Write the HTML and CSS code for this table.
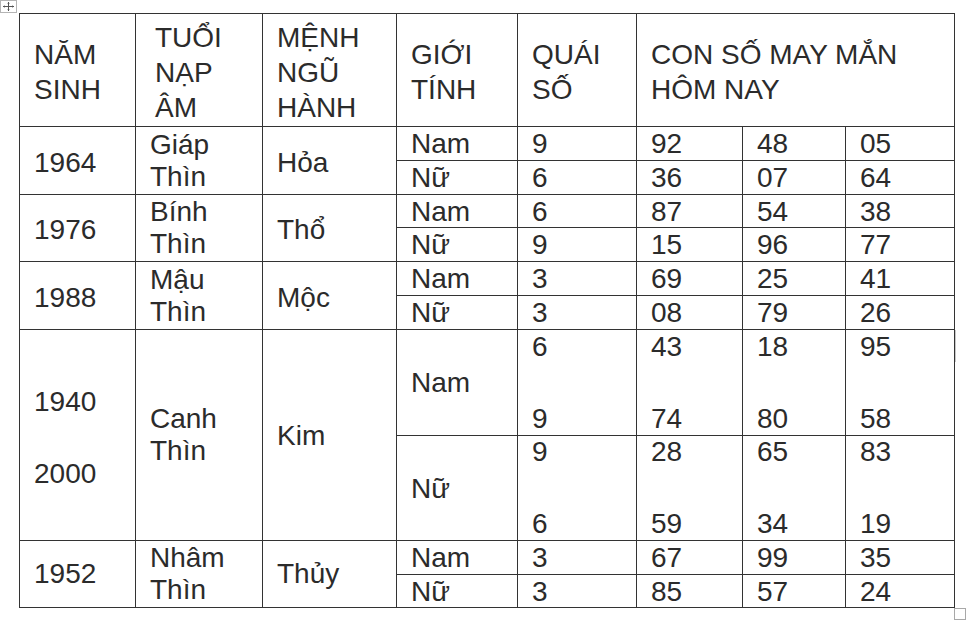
FILE: index.html
```html
<!DOCTYPE html>
<html lang="vi">
<head>
<meta charset="utf-8">
<title>Con số may mắn</title>
<link rel="stylesheet" href="styles.css">
</head>
<body>
<div class="page">
  <div class="handle">
    <svg width="17" height="13" viewBox="0 0 17 13">
      <rect x="0.5" y="0.5" width="16" height="12" fill="#fff" stroke="#b4b4b4"/>
      <path d="M3 6.5H14M8.5 2V11" stroke="#555" stroke-width="1" fill="none"/>
      <path d="M3 6.5L4.8 5.3V7.7Z M14 6.5L12.2 5.3V7.7Z M8.5 2L7.3 3.8H9.7Z M8.5 11L7.3 9.2H9.7Z" fill="#555"/>
    </svg>
  </div>
  <table class="grid">
    <colgroup>
      <col class="c1"><col class="c2"><col class="c3"><col class="c4"><col class="c5"><col class="c6"><col class="c7"><col class="c8">
    </colgroup>
    <tr class="hd">
      <td>NĂM<br>SINH</td>
      <td class="indent">TUỔI<br>NẠP<br>ÂM</td>
      <td>MỆNH<br>NGŨ<br>HÀNH</td>
      <td>GIỚI<br>TÍNH</td>
      <td>QUÁI<br>SỐ</td>
      <td colspan="3">CON SỐ MAY MẮN<br>HÔM NAY</td>
    </tr>
    <tr class="r34">
      <td rowspan="2" class="sp">1964</td>
      <td rowspan="2" class="two">Giáp<br>Thìn</td>
      <td rowspan="2" class="sp">Hỏa</td>
      <td>Nam</td><td>9</td><td>92</td><td>48</td><td>05</td>
    </tr>
    <tr class="r34">
      <td>Nữ</td><td>6</td><td>36</td><td>07</td><td>64</td>
    </tr>
    <tr class="r33">
      <td rowspan="2" class="sp">1976</td>
      <td rowspan="2" class="two">Bính<br>Thìn</td>
      <td rowspan="2" class="sp">Thổ</td>
      <td>Nam</td><td>6</td><td>87</td><td>54</td><td>38</td>
    </tr>
    <tr class="r34">
      <td>Nữ</td><td>9</td><td>15</td><td>96</td><td>77</td>
    </tr>
    <tr class="r34">
      <td rowspan="2" class="sp">1988</td>
      <td rowspan="2" class="two">Mậu<br>Thìn</td>
      <td rowspan="2" class="sp">Mộc</td>
      <td>Nam</td><td>3</td><td>69</td><td>25</td><td>41</td>
    </tr>
    <tr class="r34">
      <td>Nữ</td><td>3</td><td>08</td><td>79</td><td>26</td>
    </tr>
    <tr class="r106">
      <td rowspan="2" class="years">1940<br><br>2000</td>
      <td rowspan="2" class="two">Canh<br>Thìn</td>
      <td rowspan="2" class="kim">Kim</td>
      <td>Nam</td>
      <td class="three"><div class="stack">6<br><br>9</div></td>
      <td class="three"><div class="stack">43<br><br>74</div></td>
      <td class="three"><div class="stack">18<br><br>80</div></td>
      <td class="three"><div class="stack">95<br><br>58</div></td>
    </tr>
    <tr class="r105">
      <td>Nữ</td>
      <td class="three"><div class="stack">9<br><br>6</div></td>
      <td class="three"><div class="stack">28<br><br>59</div></td>
      <td class="three"><div class="stack">65<br><br>34</div></td>
      <td class="three"><div class="stack">83<br><br>19</div></td>
    </tr>
    <tr class="r34">
      <td rowspan="2" class="two">1952</td>
      <td rowspan="2" class="two">Nhâm<br>Thìn</td>
      <td rowspan="2" class="two">Thủy</td>
      <td>Nam</td><td>3</td><td>67</td><td>99</td><td>35</td>
    </tr>
    <tr class="r33">
      <td>Nữ</td><td>3</td><td>85</td><td>57</td><td>24</td>
    </tr>
  </table>
  <div class="caret"></div>
  <div class="resize"></div>
</div>
</body>
</html>
```
FILE: styles.css
```css
html, body {
  margin: 0;
  padding: 0;
  background: #ffffff;
}

.page {
  position: relative;
  width: 973px;
  height: 644px;
  padding: 13px 0 0 19px;
  box-sizing: border-box;
}

.handle {
  position: absolute;
  left: 0;
  top: 0;
  width: 17px;
  height: 13px;
  line-height: 0;
}

.grid {
  border-collapse: collapse;
  table-layout: fixed;
  width: 935px;
  font-family: "Liberation Sans", Arial, sans-serif;
  font-size: 28px;
  color: #2b2b2b;
}

.c1 { width: 116px; }
.c2 { width: 127px; }
.c3 { width: 134px; }
.c4 { width: 121px; }
.c5 { width: 119px; }
.c6 { width: 106px; }
.c7 { width: 103px; }
.c8 { width: 109px; }

.grid td {
  border: 1px solid #333333;
  padding: 1px 6px 0 14px;
  vertical-align: middle;
  line-height: 30px;
  white-space: nowrap;
  overflow: hidden;
}

.hd { height: 113px; }
.hd td {
  line-height: 35px;
  padding-top: 4px;
}
.hd td.indent { padding-left: 19px; }

.r34 { height: 34px; }
.r33 { height: 33px; }
.r106 { height: 106px; }
.r105 { height: 105px; }

.grid td.sp { padding-top: 4px; }
.grid td.kim { padding-top: 2px; }
.grid td.two {
  line-height: 32px;
  padding-top: 0;
}
.grid td.three {
  padding-top: 0;
  overflow: visible;
}
.stack {
  line-height: 36px;
  margin: -2px 0 -2px;
}
.grid td.years {
  line-height: 36px;
  padding-top: 5px;
}

.caret {
  position: absolute;
  left: 955px;
  top: 330px;
  width: 1px;
  height: 32px;
  background: #c8c8c8;
}

.resize {
  position: absolute;
  left: 954px;
  top: 608px;
  width: 10px;
  height: 10px;
  border: 1px solid #a8a8a8;
  background: #ffffff;
}
```
